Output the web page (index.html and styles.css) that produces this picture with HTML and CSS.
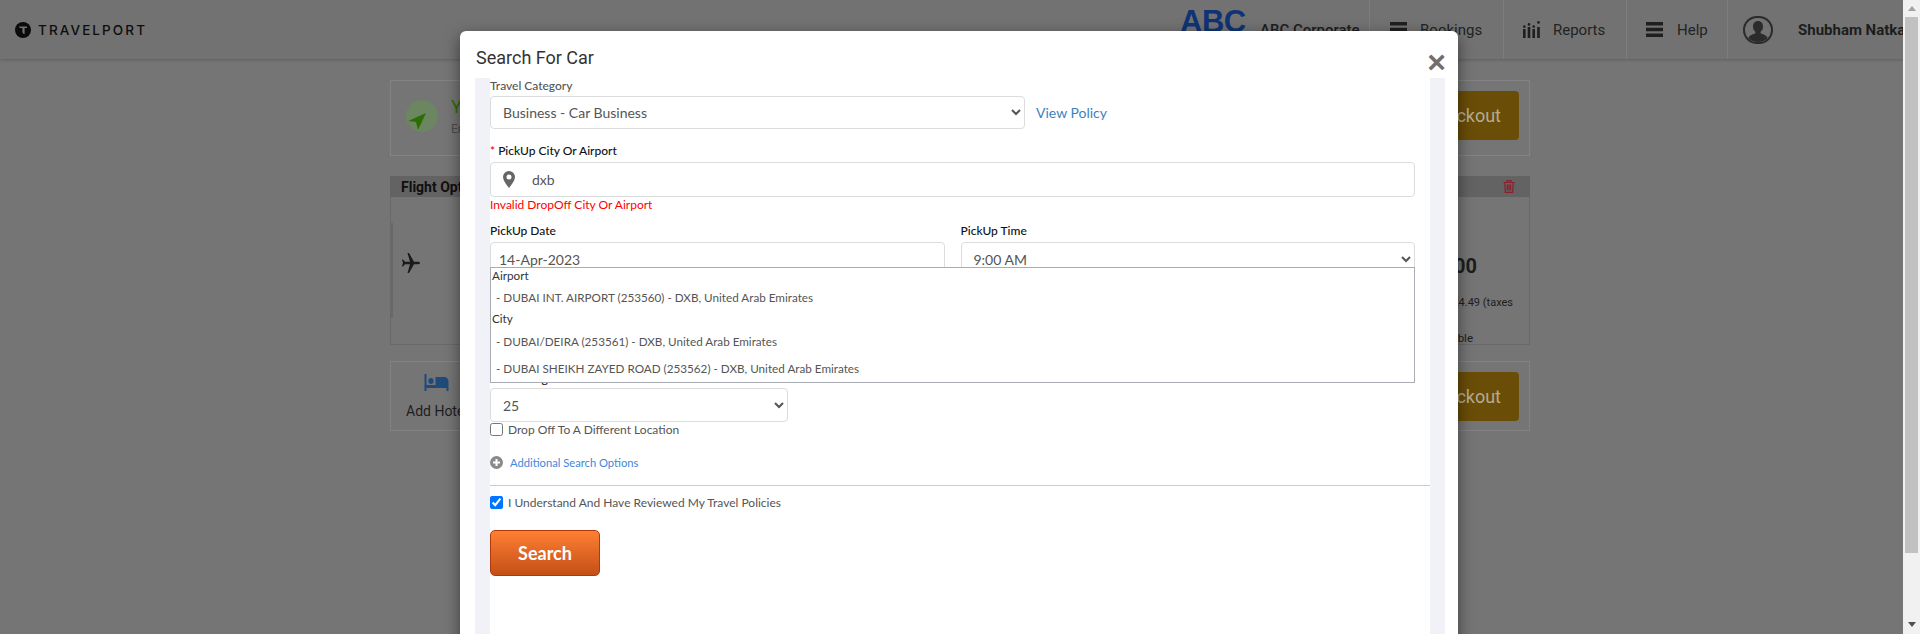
FILE: index.html
```html
<!DOCTYPE html>
<html lang="en">
<head>
    <meta charset="UTF-8">
    <meta name="viewport" content="width=device-width, initial-scale=1.0">
    <title>Search For Car</title>
    <link rel="stylesheet" href="styles.css">
</head>
<body>
    <div class="viewport">
        <header class="topbar">
            <div class="brand">
                <svg class="brand-mark" viewBox="0 0 16 16"><circle cx="8" cy="8" r="8" fill="#0b0b0b"/><path d="M4 4.600h8v1.500H9.600v6.200a2.600 2.600 0 0 1-2.200-2.500V6.100H5.600A1.600 1.600 0 0 1 4 4.600z" fill="#727272"/></svg>
                <span class="brand-name">TRAVELPORT</span>
            </div>
            <div class="topnav">
                <div class="company">
                    <span class="company-logo">ABC</span>
                    <span class="company-name">ABC Corporate</span>
                </div>
                <a class="nav-item nav-bookings">
                    <svg class="nav-icon" viewBox="0 0 17 15"><path d="M0 0h17v3.500H0zM0 5.800h17v3.500H0zM0 11.500h17V15H0z" fill="#1f1f1f"/></svg>
                    Bookings
                </a>
                <a class="nav-item nav-reports">
                    <svg class="nav-icon" viewBox="0 0 17 17"><path d="M0 8h2.600v9H0zM4.700 6h2.600v11H4.700zM9.400 8h2.600v9H9.400zM14.200 6h2.600v11h-2.600z" fill="#1f1f1f"/><circle cx="1.300" cy="5.600" r="1.300" fill="#1f1f1f"/><circle cx="6" cy="3.400" r="1.300" fill="#1f1f1f"/><circle cx="10.700" cy="5.600" r="1.300" fill="#1f1f1f"/><circle cx="15.500" cy="1.400" r="1.300" fill="#1f1f1f"/></svg>
                    Reports
                </a>
                <a class="nav-item nav-help">
                    <svg class="nav-icon" viewBox="0 0 17 15"><path d="M0 0h17v3.500H0zM0 5.800h17v3.500H0zM0 11.500h17V15H0z" fill="#1f1f1f"/></svg>
                    Help
                </a>
                <div class="user">
                    <svg class="user-icon" viewBox="0 0 30 28"><rect x="1" y="1" width="28" height="26" rx="13" fill="#727272" stroke="#2b2b2b" stroke-width="2"/><path d="M15 5c3.200 0 5 2.400 5 5.400 0 2.300-1 4.300-2.400 5.300v1.500c2.400 1.200 6 1.800 7 4.800-2.400 2.800-6 4-9.600 4s-7.200-1.200-9.600-4c1-3 4.600-3.600 7-4.800v-1.500C11 14.700 10 12.700 10 10.400 10 7.400 11.800 5 15 5z" fill="#2b2b2b"/></svg>
                    <span class="user-name">Shubham Natkar</span>
                </div>
            </div>
        </header>

        <main class="page">
            <section class="card card-notice">
                <span class="notice-badge">
                    <svg viewBox="0 0 32 32"><path d="M20 13L2.300 21 10 22l2 8z" fill="#2d6e00"/></svg>
                </span>
                <div class="notice-text">
                    <div class="notice-title">Your Itinerary</div>
                    <div class="notice-sub">Enter your details</div>
                </div>
                <a class="btn-checkout">Checkout</a>
            </section>

            <section class="flight">
                <div class="flight-head">
                    <span>Flight Options</span>
                    <svg class="trash" viewBox="0 0 12 13"><path d="M.5 2.500h11M4 2.500V.7h4v1.800M1.800 2.500l.5 9.800h7.400l.5-9.800M4.400 4.500v6M6 4.500v6M7.600 4.500v6" fill="none" stroke="#8a2029" stroke-width="1.200"/></svg>
                </div>
                <div class="flight-body">
                    <span class="flight-mark"></span>
                    <svg class="plane" viewBox="0 0 18 20"><path d="M18 10c0-.8-1-1.200-2-1.200h-4L7 0H5.500L8 8.800H3L1 6.500H0L1 10 0 13.500h1l2-2.300h5L5.500 20H7l5-8.800h4c1 0 2-.4 2-1.200z" fill="#1b1b1b"/></svg>
                    <div class="fare">
                        <div class="fare-price">$1,200.00</div>
                        <div class="fare-tax">Includes USD 124.49 (taxes</div>
                        <div class="fare-note">Non Refundable</div>
                    </div>
                </div>
            </section>

            <section class="card card-add">
                <div class="add-hotel">
                    <svg viewBox="0 0 24 17"><path d="M6.500 10C8 10 9.200 8.700 9.200 7S8 4 6.500 4 3.800 5.300 3.800 7 5 10 6.500 10zM19.500 3H11v8H2V0H0v17h2v-3h20v3h2V7.500C24 5 22 3 19.500 3z" fill="#1f4a7a"/></svg>
                    <span>Add Hotel</span>
                </div>
                <a class="btn-checkout">Checkout</a>
            </section>
        </main>

        <div class="modal-layer">
            <div class="modal">
                <div class="modal-header">
                    <h4 class="modal-title">Search For Car</h4>
                    <span class="modal-close">&times;</span>
                </div>
                <div class="modal-pane">
                    <form class="car-form">
                        <label class="lbl lbl-plain">Travel Category</label>
                        <div class="category-row">
                            <select class="field field-category">
                                <option>Business - Car Business</option>
                            </select>
                            <a class="view-policy">View Policy</a>
                        </div>

                        <label class="lbl lbl-city"><span class="req">*</span> PickUp City Or Airport</label>
                        <div class="field city-field">
                            <svg class="pin" viewBox="0 0 12 17"><path d="M6 0a6 6 0 0 0-6 6c0 4 6 11 6 11s6-7 6-11a6 6 0 0 0-6-6zm0 8.500A2.500 2.500 0 1 1 6 3.500a2.500 2.500 0 0 1 0 5z" fill="#666"/></svg>
                            <span>dxb</span>
                        </div>
                        <div class="error">Invalid DropOff City Or Airport</div>

                        <div class="date-row">
                            <div class="date-col">
                                <label class="lbl">PickUp Date</label>
                                <input class="field field-date" type="text" value="14-Apr-2023">
                            </div>
                            <div class="date-col">
                                <label class="lbl">PickUp Time</label>
                                <select class="field field-time">
                                    <option>9:00 AM</option>
                                </select>
                            </div>
                        </div>

                        <div class="suggest">
                            <div class="suggest-group">Airport</div>
                            <div class="suggest-item">- DUBAI INT. AIRPORT (253560) - DXB, United Arab Emirates</div>
                            <div class="suggest-group suggest-city">City</div>
                            <div class="suggest-item">- DUBAI/DEIRA (253561) - DXB, United Arab Emirates</div>
                            <div class="suggest-item suggest-last">- DUBAI SHEIKH ZAYED ROAD (253562) - DXB, United Arab Emirates</div>
                        </div>

                        <label class="lbl lbl-age">Driver's Age</label>
                        <select class="field field-age">
                            <option>25</option>
                        </select>

                        <label class="check check-dropoff"><input type="checkbox"> Drop Off To A Different Location</label>

                        <a class="more-options">
                            <svg viewBox="0 0 13 13"><circle cx="6.500" cy="6.500" r="6.500" fill="#8a8a8a"/><path d="M5.500 3h2v2.500H10v2H7.500V10h-2V7.500H3v-2h2.500z" fill="#fff"/></svg>
                            Additional Search Options
                        </a>

                        <hr class="divider">

                        <label class="check check-policy"><input type="checkbox" checked> I Understand And Have Reviewed My Travel Policies</label>

                        <button class="btn-search" type="button">Search</button>
                    </form>
                </div>
            </div>
        </div>
    </div>

    <div class="scrollbar">
        <span class="scroll-up"></span>
        <span class="scroll-thumb"></span>
        <span class="scroll-down"></span>
    </div>
</body>
</html>
```

FILE: styles.css
```css
html, body {
    height: 100%;
    margin: 0;
    overflow: hidden;
}
body {
    display: flex;
    font-family: Roboto, sans-serif;
    background-color: #757575;
    color: #1d1d1d;
}
.viewport {
    position: relative;
    flex: 1;
    min-width: 0;
    overflow: hidden;
}

/* scrollbar */
.scrollbar {
    width: 17px;
    flex: none;
    display: flex;
    flex-direction: column;
    background-color: #f1f1f1;
}
.scroll-up {
    width: 0;
    height: 0;
    margin: 6px auto;
    border-left: 4px solid transparent;
    border-right: 4px solid transparent;
    border-bottom: 5px solid #a3a3a3;
}
.scroll-thumb {
    height: 536px;
    margin: 0 2px;
    background-color: #c1c1c1;
}
.scroll-down {
    width: 0;
    height: 0;
    margin: auto auto 7px;
    border-left: 4px solid transparent;
    border-right: 4px solid transparent;
    border-top: 5px solid #505050;
}

/* header */
.topbar {
    height: 59px;
    display: flex;
    justify-content: space-between;
    background-color: #727272;
    box-shadow: 0 1px 3px rgba(0,0,0,0.2);
    overflow: hidden;
}
.brand {
    display: flex;
    align-items: center;
    padding-left: 15px;
}
.brand-mark {
    width: 16px;
    height: 16px;
    margin-right: 7px;
}
.brand-name {
    font-family: Inter, sans-serif;
    font-size: 13.5px;
    font-weight: 500;
    letter-spacing: 2.1px;
    color: #0d0d0d;
}
.topnav {
    display: flex;
    width: 724px;
    flex: none;
    white-space: nowrap;
}
.company {
    width: 190px;
    flex: none;
    display: flex;
    align-items: center;
}
.company-logo {
    font-family: "Liberation Sans", sans-serif;
    font-size: 31px;
    font-weight: 700;
    letter-spacing: -0.5px;
    color: #0f3374;
    width: 65px;
    margin: -15px 15px 0 1px;
}
.company-name {
    font-size: 15px;
    font-weight: 500;
    color: #1d1d1d;
}
.nav-item {
    display: flex;
    align-items: center;
    flex: none;
    box-sizing: border-box;
    border-left: 1px solid #7d7d7d;
    padding-left: 20px;
    font-size: 15px;
    color: #222;
}
.nav-bookings { width: 134px; }
.nav-reports { width: 123px; padding-left: 19px; }
.nav-help { width: 101px; padding-left: 19px; }
.nav-icon {
    width: 17px;
    height: 15px;
    margin-right: 13px;
}
.nav-help .nav-icon {
    margin-right: 14px;
}
.nav-reports .nav-icon {
    height: 17px;
}
.user {
    display: flex;
    align-items: center;
    flex: 1;
    border-left: 1px solid #7d7d7d;
    padding-left: 15px;
    overflow: hidden;
}
.user-icon {
    width: 30px;
    height: 28px;
    flex: none;
    margin-right: 25px;
}
.user-name {
    font-size: 15px;
    font-weight: 700;
    color: #1d1d1d;
}

/* page behind the modal */
.page {
    width: 1140px;
    margin: 21px 0 0 390px;
}
.card {
    position: relative;
    box-sizing: border-box;
    display: flex;
    align-items: center;
    justify-content: space-between;
    border: 1px solid #838383;
}
.card-notice {
    height: 76px;
    padding: 0 10px 5px 15px;
}
.notice-badge {
    width: 32px;
    height: 32px;
    flex: none;
    border-radius: 50%;
    background-color: #6b8660;
}
.notice-badge svg {
    display: block;
    width: 32px;
    height: 32px;
}
.notice-text {
    flex: 1;
    padding-left: 13px;
}
.notice-title {
    font-size: 18px;
    color: #2d6e00;
}
.notice-sub {
    margin-top: 5px;
    font-size: 12px;
    color: #4c4c4c;
}
.btn-checkout {
    width: 200px;
    height: 49px;
    padding-right: 18px;
    box-sizing: border-box;
    line-height: 49px;
    text-align: right;
    font-size: 18px;
    color: #b5ab90;
    background-color: #6a4d07;
    border-radius: 4px;
}
.flight {
    margin-top: 20px;
}
.flight-head {
    height: 21px;
    padding: 0 15px 0 11px;
    display: flex;
    align-items: center;
    justify-content: space-between;
    font-size: 14px;
    font-weight: 700;
    color: #0f0f0f;
    background-color: #636363;
}
.trash {
    width: 12px;
    height: 13px;
}
.flight-body {
    position: relative;
    box-sizing: border-box;
    height: 148px;
    display: flex;
    justify-content: space-between;
    border: 1px solid #696969;
    border-top: 0;
}
.flight-mark {
    position: absolute;
    left: 0;
    top: 26px;
    width: 2px;
    height: 95px;
    background-color: #686868;
}
.plane {
    width: 18px;
    height: 20px;
    margin: 56px 0 0 11px;
}
.fare {
    padding: 57px 16px 0 0;
    text-align: right;
    color: #1d1d1d;
}
.fare-price {
    padding-right: 36px;
    font-size: 20px;
    font-weight: 700;
    line-height: 24px;
}
.fare-tax {
    margin-top: 18px;
    font-size: 11px;
    line-height: 14px;
}
.fare-note {
    margin-top: 21px;
    padding-right: 40px;
    font-size: 11.5px;
    line-height: 14px;
}
.card-add {
    height: 70px;
    margin-top: 16px;
    padding: 0 10px 0 15px;
}
.add-hotel {
    display: flex;
    flex-direction: column;
    align-items: center;
    font-size: 14px;
    color: #1d1d1d;
}
.add-hotel svg {
    width: 25px;
    height: 17px;
    margin-bottom: 12px;
}

/* modal */
.modal-layer {
    position: absolute;
    top: 0;
    left: 0;
    right: 0;
    bottom: 0;
}
.modal {
    box-sizing: border-box;
    width: 998px;
    min-height: 900px;
    margin: 31px 0 0 460px;
    padding: 0 13px 0 15px;
    background-color: #fff;
    border-radius: 6px 6px 0 0;
    box-shadow: 0 5px 15px rgba(0,0,0,0.5);
}
.modal-header {
    height: 47px;
    display: flex;
    justify-content: space-between;
}
.modal-title {
    margin: 17px 0 0 1px;
    font-size: 18px;
    font-weight: 400;
    line-height: 20px;
    color: #333;
}
.modal-close {
    margin: 13px -1px 0 0;
    font-family: "Liberation Sans", sans-serif;
    font-size: 32px;
    font-weight: 700;
    line-height: 36px;
    color: #6f6f6f;
}
.modal-pane {
    min-height: 800px;
    padding: 0 15px;
    background-color: #f1f2f7;
}
.car-form {
    position: relative;
    min-height: 800px;
    padding: 1px 0 0;
    background-color: #fff;
    font-family: Lato, sans-serif;
    color: #555;
}
.lbl {
    display: block;
    margin-bottom: 3px;
    font-size: 12px;
    font-weight: 500;
    line-height: 14px;
    color: #111;
}
.lbl-plain {
    color: #555;
}
.req {
    color: #e00;
}
.field {
    box-sizing: border-box;
    border: 1px solid #dcdcdc;
    border-radius: 4px;
    background-color: #fff;
    font-family: Lato, sans-serif;
    font-size: 14px;
    color: #555;
    outline: none;
}
.category-row {
    display: flex;
    align-items: center;
}
.field-category {
    width: 535px;
    height: 33px;
    padding-left: 8px;
}
.view-policy {
    margin-left: 11px;
    font-size: 14px;
    color: #3a83c0;
}
.lbl-city {
    margin: 15px 0 4px;
}
.city-field {
    width: 925px;
    height: 35px;
    display: flex;
    align-items: center;
    padding-left: 12px;
}
.pin {
    width: 12px;
    height: 17px;
    margin-right: 17px;
}
.error {
    margin-top: 1px;
    font-size: 12px;
    line-height: 14px;
    color: #f00;
}
.date-row {
    display: flex;
    gap: 16px;
    width: 925px;
    margin-top: 12px;
}
.date-col {
    flex: 1;
}
.date-col .lbl {
    margin-bottom: 4px;
}
.field-date {
    width: 100%;
    height: 34px;
    padding-left: 8px;
}
.field-time {
    width: 100%;
    height: 34px;
    padding-left: 8px;
}
.suggest {
    position: absolute;
    top: 189px;
    left: 0;
    width: 925px;
    height: 116px;
    box-sizing: border-box;
    border: 1px solid #a9adb3;
    background-color: #fff;
    overflow: hidden;
}
.suggest-group {
    padding-left: 1px;
    font-size: 11.7px;
    line-height: 14px;
    color: #333;
}
.suggest-city {
    margin-bottom: 1px;
}
.suggest-item {
    padding: 8px 0 7px 5px;
    font-size: 11.7px;
    line-height: 14px;
    color: #555;
}
.suggest-last {
    padding-top: 6px;
}
.lbl-age {
    margin: 96px 0 2px;
}
.field-age {
    display: block;
    width: 298px;
    height: 34px;
    padding-left: 8px;
}
.check {
    display: flex;
    align-items: center;
    height: 13px;
    font-size: 12px;
    color: #555;
}
.check input {
    width: 13px;
    height: 13px;
    margin: 0 5px 0 0;
}
.check-dropoff {
    margin-top: 1px;
}
.more-options {
    display: flex;
    align-items: center;
    height: 14px;
    margin-top: 19px;
    font-size: 11.2px;
    color: #4088da;
}
.more-options svg {
    width: 13px;
    height: 13px;
    margin-right: 7px;
}
.divider {
    height: 1px;
    margin: 16px 0 0;
    border: 0;
    background-color: #ccc;
}
.check-policy {
    margin-top: 10px;
}
.btn-search {
    display: block;
    width: 110px;
    height: 46px;
    margin-top: 21px;
    padding: 0;
    border: 1px solid #b03a0c;
    border-radius: 5px;
    background-image: linear-gradient(#ff7f33, #c44f17);
    font-family: Lato, sans-serif;
    font-size: 18px;
    font-weight: 700;
    color: #fff;
}
```
